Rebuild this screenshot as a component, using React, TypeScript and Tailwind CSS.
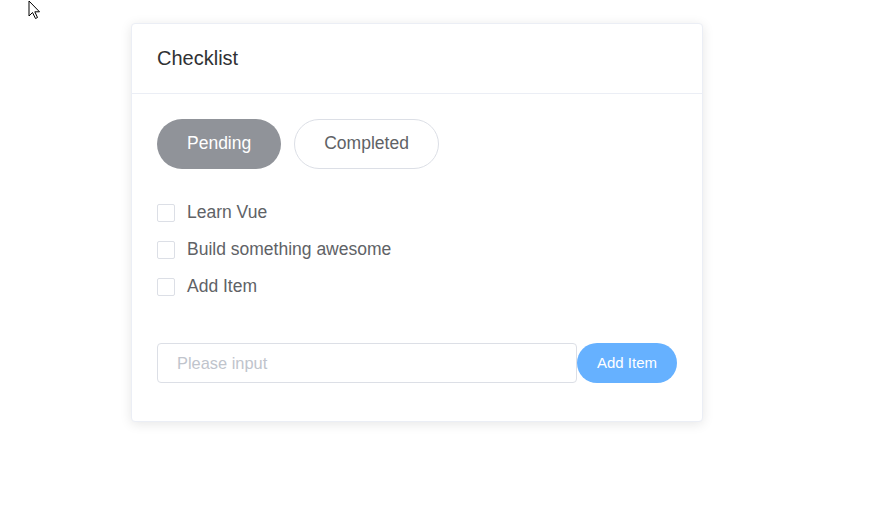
import { useState } from "react";

const items = ["Learn Vue", "Build something awesome", "Add Item"];

function Cursor() {
  return (
    <svg
      className="absolute left-[28px] top-0"
      width="14"
      height="20"
      viewBox="0 0 14 20"
    >
      <path
        d="M1 1 L1 16 L4.5 12.5 L7.5 18.5 L9.5 17.5 L6.8 11.8 L11.5 11.8 Z"
        fill="#fff"
        stroke="#000"
        strokeWidth="1"
        strokeLinejoin="round"
      />
    </svg>
  );
}

export default function App() {
  const [tab, setTab] = useState<"pending" | "completed">("pending");

  return (
    <div
      className="relative min-h-[524px] w-full bg-white pt-[23px] pl-[131px]"
      style={{ fontFamily: '"Liberation Sans", Arial, sans-serif' }}
    >
      <Cursor />
      <div className="w-[572px] rounded-[4px] border border-[#ebeef5] bg-white shadow-[0_2px_12px_0_rgba(0,0,0,0.1)]">
        <div className="flex h-[70px] items-center border-b border-[#ebeef5] px-[25px] pb-[2px]">
          <h2 className="text-[20px] text-[#303133]">Checklist</h2>
        </div>

        <div className="px-[25px] pt-[25px] pb-[38px]">
          <div className="flex gap-[13px]">
            <button
              onClick={() => setTab("pending")}
              className={`h-[50px] rounded-full px-[30px] pb-[2px] text-[17.5px] ${
                tab === "pending"
                  ? "bg-[#909399] text-white"
                  : "border border-[#dcdfe6] text-[#606266]"
              }`}
            >
              Pending
            </button>
            <button
              onClick={() => setTab("completed")}
              className={`h-[50px] rounded-full px-[29px] pb-[2px] text-[17.5px] ${
                tab === "completed"
                  ? "bg-[#909399] text-white"
                  : "border border-[#dcdfe6] text-[#606266]"
              }`}
            >
              Completed
            </button>
          </div>

          <ul className="mt-[25px]">
            {items.map((item) => (
              <li key={item} className="flex h-[37px] items-center gap-[12px]">
                <span className="h-[18px] w-[18px] rounded-[2px] border border-[#dcdfe6] bg-white" />
                <span className="text-[17.5px] text-[#606266]">{item}</span>
              </li>
            ))}
          </ul>

          <div className="mt-[38px] flex">
            <input
              placeholder="Please input"
              className="h-[40px] w-[420px] rounded-[4px] border border-[#dcdfe6] px-[19px] text-[16.4px] text-[#606266] outline-none placeholder:text-[#c0c4cc]"
            />
            <button className="h-[40px] w-[100px] rounded-full bg-[#66b1ff] text-[15px] text-white">
              Add Item
            </button>
          </div>
        </div>
      </div>
    </div>
  );
}
